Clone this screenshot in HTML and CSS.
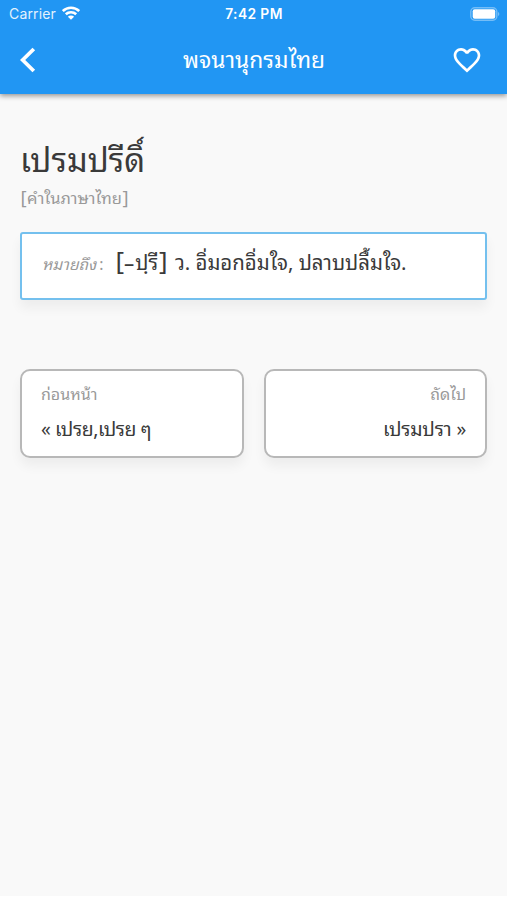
FILE: index.html
```html
<!DOCTYPE html>
<html lang="th">
<head>
    <meta charset="UTF-8">
    <meta name="viewport" content="width=device-width, initial-scale=1.0">
    <title>พจนานุกรมไทย</title>
    <link rel="stylesheet" href="styles.css">
</head>
<body>
    <header class="topbar">
        <div class="status">
            <div class="carrier">
                <span>Carrier</span>
                <svg class="wifi" viewBox="0 0 18 14">
                    <path d="M.8 5a11.8 11.8 0 0 1 16.4 0" />
                    <path d="M3.8 8.3a7.5 7.5 0 0 1 10.4 0" />
                    <path class="dot" d="M9 13.8l-3.1-3.1a4.4 4.4 0 0 1 6.2 0z" />
                </svg>
            </div>
            <span class="clock">7:42 PM</span>
            <svg class="battery" viewBox="0 0 30 14">
                <rect class="shell" x=".8" y=".8" width="26" height="12.4" rx="4" />
                <rect class="charge" x="2.7" y="2.3" width="22.5" height="9.4" rx="2" />
                <path class="tip" d="M28 5c1.8.7 1.8 3.3 0 4z" />
            </svg>
        </div>
        <div class="nav">
            <svg class="back" viewBox="0 0 16 26"><path d="M13.8 2L2.6 13l11.2 11" /></svg>
            <h1 class="title">พจนานุกรมไทย</h1>
            <svg class="heart" viewBox="0 0 24 24"><path d="M16.5 3c-1.74 0-3.41.81-4.5 2.09C10.91 3.81 9.24 3 7.5 3 4.42 3 2 5.42 2 8.5c0 3.78 3.4 6.86 8.55 11.54L12 21.35l1.45-1.32C18.6 15.36 22 12.28 22 8.5 22 5.42 19.58 3 16.5 3zm-4.4 15.55l-.1.1-.1-.1C7.14 14.24 4 11.39 4 8.5 4 6.5 5.5 5 7.5 5c1.54 0 3.04.99 3.57 2.36h1.87C13.46 5.99 14.96 5 16.5 5c2 0 3.5 1.5 3.5 3.5 0 2.89-3.14 5.74-7.9 10.05z" /></svg>
        </div>
    </header>

    <main class="content">
        <h2 class="word">เปรมปรีดิ์</h2>
        <p class="lang"><span class="thin">[</span>คำในภาษาไทย<span class="thin">]</span></p>
        <div class="meaning">
            <span class="label">หมายถึง<span class="colon"> :</span></span>
            <span class="text"><span class="bracket">[</span><span class="dash">–</span>ปฺรี<span class="bracket close">]</span> ว. อิ่มอกอิ่มใจ, ปลาบปลื้มใจ.</span>
        </div>
        <div class="pager">
            <a class="page">
                <span class="hint">ก่อนหน้า</span>
                <span class="link">« เปรย,เปรย ๆ</span>
            </a>
            <a class="page next">
                <span class="hint">ถัดไป</span>
                <span class="link">เปรมปรา »</span>
            </a>
        </div>
    </main>
</body>
</html>
```
FILE: styles.css
```css
*
{
    box-sizing: border-box;
}
html
{
    background: #fff;
}
body
{
    margin: 0;
    height: 896px;
    background: #f9f9f9;
    color: #3a3a3a;
    font-family: "Noto Sans Thai Looped", "Noto Looped Thai", "Loma", "Garuda", "Waree", "Noto Sans", sans-serif;
}
h1, h2, p
{
    margin: 0;
    font-weight: 400;
}
.topbar
{
    height: 94px;
    background: #2196f3;
    color: #fff;
    box-shadow: 0 2px 5px rgba(0, 0, 0, .4);
}
.status
{
    display: grid;
    grid-template-columns: 1fr auto 1fr;
    align-items: center;
    height: 27px;
    padding: 0 7px 0 8px;
    font: 14px Inter, sans-serif;
}
.carrier
{
    display: flex;
    align-items: center;
    gap: 6px;
    padding-left: 1px;
    letter-spacing: .15px;
    color: #e3f2fd;
}
.wifi
{
    width: 18px;
    height: 14px;
    margin-top: -2px;
    fill: none;
    stroke: #fff;
    stroke-width: 2.6;
}
.wifi .dot
{
    fill: #fff;
    stroke: none;
}
.clock
{
    font-size: 13.8px;
    font-weight: 600;
    letter-spacing: .4px;
}
.battery
{
    justify-self: end;
    width: 30px;
    height: 14px;
}
.shell
{
    fill: none;
    stroke: #74bdf7;
    stroke-width: 1.4;
}
.charge
{
    fill: #fff;
}
.tip
{
    fill: #74bdf7;
}
.nav
{
    display: grid;
    grid-template-columns: 40px 1fr 40px;
    align-items: center;
    height: 66px;
    padding: 0 24px 0 20px;
}
.back
{
    width: 16px;
    height: 26px;
    fill: none;
    stroke: #fff;
    stroke-width: 3.8;
}
.title
{
    padding: 0 0 4px 5px;
    font-size: 22.8px;
    text-align: center;
    white-space: nowrap;
}
.heart
{
    justify-self: end;
    width: 32px;
    height: 32px;
    fill: #fff;
}
.content
{
    padding: 38px 20px 0;
}
.word
{
    font-size: 32.7px;
    line-height: 50px;
}
.lang
{
    padding-top: 1px;
    font-size: 16.5px;
    line-height: 28px;
    color: #999;
}
.thin
{
    padding: 0 .5px;
    font-size: 18.5px;
    line-height: 20px;
}
.meaning
{
    display: flex;
    align-items: center;
    gap: 12px;
    height: 68px;
    margin-top: 21px;
    padding: 0 20px 10px;
    border: 2px solid #74c0ee;
    border-radius: 3px;
    background: #fff;
    box-shadow: 0 8px 12px rgba(0, 0, 0, .05);
    white-space: nowrap;
}
.label
{
    padding-top: 2px;
    font-size: 15.7px;
    font-style: italic;
    color: #999;
}
.colon
{
    margin-left: -1px;
    font-style: normal;
}
.text
{
    font-size: 20.4px;
    line-height: 40px;
}
.bracket
{
    font-size: 26px;
    line-height: 30px;
}
.close
{
    padding: 0 2px 0 1px;
}
.dash
{
    padding-right: 1px;
    font-weight: 500;
}
.pager
{
    display: grid;
    grid-template-columns: 1fr 1fr;
    gap: 20px;
    margin-top: 69px;
}
.page
{
    display: flex;
    flex-direction: column;
    height: 89px;
    padding: 9px 19px;
    border: 2px solid #b8b8b8;
    border-radius: 10px;
    background: #fff;
    box-shadow: 0 8px 12px rgba(0, 0, 0, .05);
    white-space: nowrap;
}
.next
{
    text-align: right;
}
.hint
{
    font-size: 16px;
    line-height: 26px;
    color: #999;
}
.link
{
    font-size: 19.4px;
    letter-spacing: -.4px;
    line-height: 44px;
}
.next .link
{
    letter-spacing: -.2px;
}
```
